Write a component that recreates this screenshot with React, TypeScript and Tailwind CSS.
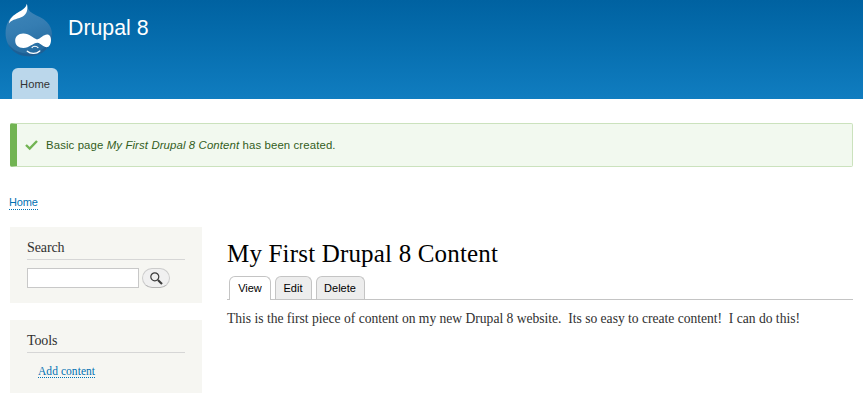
import React from 'react';

const sans = "font-['Liberation_Sans',Arial,sans-serif]";
const serif = "font-['Liberation_Serif',Georgia,serif]";

function Logo() {
  return (
    <svg className="mt-[3px] ml-[4px] h-[54px] w-[50px] shrink-0" viewBox="4 3 50 54">
      <defs>
        <linearGradient id="drop" x1="0" y1="0" x2="0.3" y2="1">
          <stop offset="0" stopColor="#3f87ba" />
          <stop offset="0.55" stopColor="#357db2" />
          <stop offset="1" stopColor="#266ca1" />
        </linearGradient>
      </defs>
      <path d="M26.9 3.8 C27.3 8 28.6 11 32.5 13.3 C38 16.5 43 18 46.8 22 C50.3 25.6 52 29.8 52 34.5 C52 47.2 41.8 56.3 29 56.3 C16 56.3 5.6 47 5.6 33.5 C5.6 25.3 8.3 19 14 15 C19.5 11.3 25.5 9.5 26.9 3.8Z" fill="url(#drop)" />
      <path d="M51.8 34 C52.3 47 42 56.3 29 56.3 C19 56.3 11.5 51.5 8 44 C15 52.5 25 54.8 34 52.8 C44 50.3 50 44 51.8 34Z" fill="#195b91" opacity=".75" />
      <path d="M26.9 3.8 C28.2 9.5 26.8 14.2 22.8 16.6 C18.5 19.2 12.5 18.8 8.9 23.5 C9.4 18.7 13.5 15.2 18 12.6 C22.5 10 25.8 8.3 26.9 3.8Z" fill="#fff" />
      <path d="M15.2 40.7 C15.2 36.4 18.7 33.4 23.5 33.6 C29.5 33.9 33 38 37 39.6 C40.5 38.8 43.5 34.6 47 34.6 C50 34.6 51 37.2 51 40 C51 44 49.3 47.2 46.6 47.2 C43.5 47.2 41 43.2 37.5 42.7 C33.5 42.6 29.5 47.9 23.3 47.9 C18.5 47.9 15.2 45 15.2 40.7Z" fill="#fff" />
      <path d="M32 47.6 C33.2 45.8 36.5 45.8 38 47.6" fill="none" stroke="#fff" strokeWidth="1.1" strokeLinecap="round" />
      <path d="M27.3 51.2 C30.8 54.2 36.3 54 39.8 50.9" fill="none" stroke="#fff" strokeWidth="1.4" strokeLinecap="round" />
    </svg>
  );
}

function Block({ title, children, height }: { title: string; children: React.ReactNode; height: string }) {
  return (
    <section className={`w-[192px] bg-[#f6f6f2] px-[17px] pt-[12px] ${height}`}>
      <h2 className={`${serif} h-[21px] border-b border-[#d6d6d6] text-[14px] leading-[18px] tracking-[-0.1px] text-[#303030]`}>
        {title}
      </h2>
      {children}
    </section>
  );
}

export default function App() {
  return (
    <div className={`${sans} h-[406px] w-[863px] overflow-hidden bg-white text-[#3b3b3b]`}>
      <header className="flex h-[99px] flex-col justify-between bg-linear-to-b from-[#0062a1] to-[#107dc0]">
        <div className="flex">
          <Logo />
          <div className="mt-[14px] ml-[14px] text-[21.3px] leading-[28px] whitespace-nowrap text-white">Drupal 8</div>
        </div>
        <nav className="flex pl-[12px]">
          <a className="flex h-[31px] w-[46px] items-center justify-center rounded-t-[6px] bg-[#bbd7eb] pt-[2px] text-[11.2px] text-[#333]">Home</a>
        </nav>
      </header>
      <div className="mt-[24px] ml-[10px] flex h-[44px] w-[843px] items-center rounded-[2px] border border-l-[7px] border-[#cbe2bd] border-l-[#72b453] bg-[#f2f9ef] pl-[8px] text-[#325e1c]">
        <svg className="h-[12px] w-[13px]" viewBox="0 0 13 12">
          <path d="M1 6 L4.7 9.5 L12 2" fill="none" stroke="#72b453" strokeWidth="2.4" />
        </svg>
        <p className="ml-[8px] pt-[2px] text-[11.4px] tracking-[0.11px] whitespace-nowrap">
          Basic page <em>My First Drupal 8 Content</em> has been created.
        </p>
      </div>
      <nav className="mt-[29px] flex pl-[9px]">
        <a className="border-b border-dotted border-[#0071b3] text-[11px] leading-[13px] tracking-[-0.15px] text-[#0071b3]">Home</a>
      </nav>
      <div className="mt-[17px] flex pl-[10px]">
        <aside className="flex flex-col gap-[17px]">
          <Block title="Search" height="h-[76px]">
            <div className="mt-[8px] flex items-center gap-[3px]">
              <input className="h-[20px] w-[112px] border border-[#c8c8c8] bg-white" />
              <button className="flex h-[20px] w-[28px] items-center justify-center rounded-full border border-[#ccc] border-b-[#b4b4b4] bg-[#f0f0f0]">
                <svg className="h-[13px] w-[13px]" viewBox="0 0 13 13" fill="none" stroke="#3b3b3b">
                  <circle cx="4.8" cy="4.8" r="4" strokeWidth="1.2" />
                  <path d="M7.9 7.9 L12 12" strokeWidth="2.1" />
                </svg>
              </button>
            </div>
          </Block>
          <Block title="Tools" height="h-[73px]">
            <div className="mt-[12px] flex pl-[11px]">
              <a className={`${serif} border-b border-dotted border-[#0071b3] text-[11.5px] leading-[12px] tracking-[0.05px] whitespace-nowrap text-[#0071b3]`}>Add content</a>
            </div>
          </Block>
        </aside>
        <main className="ml-[25px] w-[626px] pt-[11px]">
          <h1 className={`${serif} text-[25px] leading-[32px] tracking-[0.18px] whitespace-nowrap text-black`}>My First Drupal 8 Content</h1>
          <div className="mt-[6px] flex h-[24px] items-end gap-[4px] border-b border-[#c4c4c4] pl-[2px] text-[11px] text-black">
            <a className="-mb-px flex h-[24px] w-[42px] items-center justify-center rounded-t-[6px] border border-b-0 border-[#c4c4c4] bg-white">View</a>
            <a className="flex h-[23px] w-[37px] items-center justify-center rounded-t-[6px] border border-b-0 border-[#c4c4c4] bg-[#ededed] pr-px">Edit</a>
            <a className="flex h-[23px] w-[49px] items-center justify-center rounded-t-[6px] border border-b-0 border-[#c4c4c4] bg-[#ededed] pr-px">Delete</a>
          </div>
          <p className={`${serif} mt-[10px] text-[13.6px] leading-[17px] tracking-[-0.018px] whitespace-pre text-[#303030]`}>
            {'This is the first piece of content on my new Drupal 8 website.  Its so easy to create content!  I can do this!'}
          </p>
        </main>
      </div>
    </div>
  );
}
